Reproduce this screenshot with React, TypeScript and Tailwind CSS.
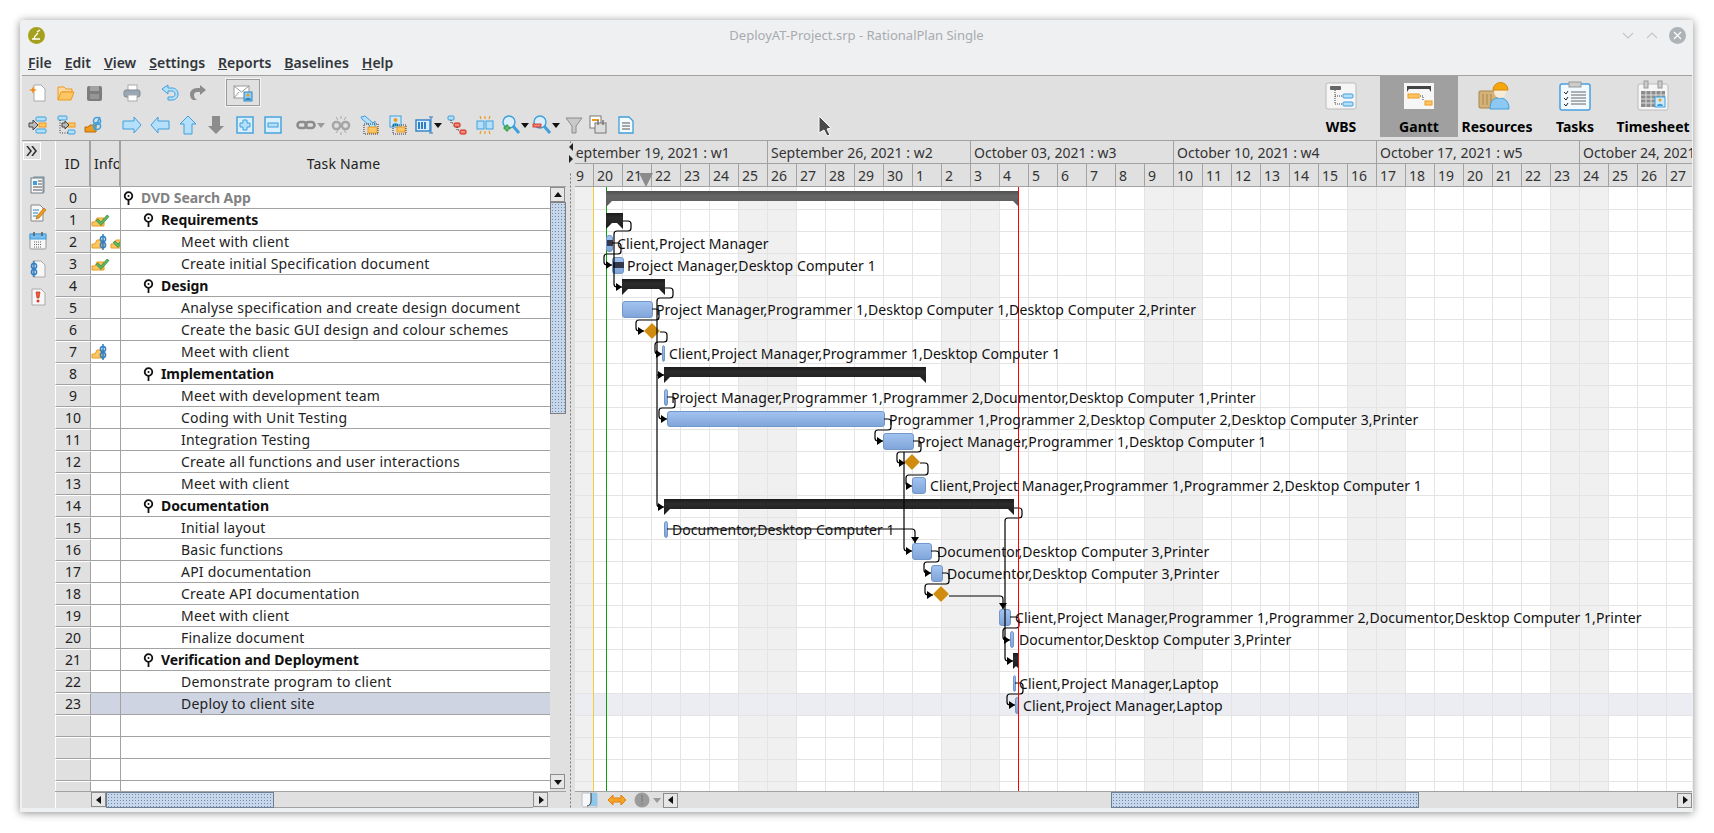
import type { ReactNode } from "react";

type Pt = [number, number];

const ic = (children: ReactNode, size = 20) => (
  <svg width={size} height={size} viewBox="0 0 20 20">
    {children}
  </svg>
);

const B = "#3f9fdc";
const BL = "#b5e0fb";
const O = "#ee9a1f";
const OL = "#fbc765";
const G = "#8c8c8c";

const Folder = ({ x = 0, y = 0 }: { x?: number; y?: number }) => (
  <g transform={`translate(${x} ${y})`}>
    <path d="M0 4h3l2-4 7 0-3 4h3v4H0z" fill={OL} stroke={O} strokeWidth="1" />
  </g>
);

const LinkBlue = ({ x = 0, y = 0 }: { x?: number; y?: number }) => (
  <g transform={`translate(${x} ${y})`} fill="none" stroke="#2f7fc4" strokeWidth="1.5">
    <path d="M3 0v16" />
    <ellipse cx="3" cy="5" rx="2.6" ry="2.6" />
    <ellipse cx="3" cy="11" rx="2.6" ry="2.6" />
  </g>
);

const icons = {
  newDoc: ic(
    <>
      <path d="M6 2h7l4 4v12H6z" fill="#fff" stroke="#aaa" />
      <path d="M5 3l1 3 3 1-3 1-1 3-1-3-3-1 3-1z" fill="#f28a12" />
    </>
  ),
  open: ic(
    <>
      <path d="M2 17V4h6l2 2h6v3H6l-4 8z" fill="#fbd9a0" stroke={O} />
      <path d="M2 17l3-8h13l-3 8z" fill={OL} stroke={O} />
    </>
  ),
  save: ic(
    <>
      <rect x="3" y="3" width="15" height="15" rx="2" fill="#7d7d7d" />
      <rect x="6" y="3" width="9" height="5" fill="#a3a3a3" />
      <rect x="6" y="11" width="9" height="5" fill="#969696" />
    </>
  ),
  print: ic(
    <>
      <rect x="6" y="2" width="9" height="6" fill="#fff" stroke="#aaa" />
      <rect x="2" y="7" width="16" height="7" rx="2" fill="#9aa7b2" stroke="#7f8a94" />
      <rect x="6" y="12" width="9" height="6" fill="#fff" stroke="#aaa" />
    </>
  ),
  undo: ic(
    <path d="M2 6l6-4v3h4c4 0 6 3 6 6s-2 6-6 6H8v-3h4c2 0 3-1 3-3s-1-3-3-3H8v3z" fill={BL} stroke={B} />
  ),
  redo: ic(<path d="M18 7l-6-5v3H9c-4 0-7 3-7 6 0 3 1 5 3 6h4c-2-1-3-3-3-5s1-3 3-3h3v3z" fill={G} />),
  mail: ic(
    <>
      <rect x="1" y="3" width="15" height="12" fill="#fff" stroke="#999" />
      <path d="M1 3l7.5 6L16 3M1 15l5-6M16 15l-5-6" fill="none" stroke="#999" />
      <rect x="11" y="9" width="8" height="9" fill="#8fcdf3" stroke="#2f86c4" />
      <circle cx="15" cy="12" r="1.6" fill="#f09a28" />
      <path d="M12 17c0-3 6-3 6 0z" fill="#2f86c4" />
    </>
  ),
  indent: ic(
    <>
      <rect x="8" y="2" width="10" height="4" rx="1" fill={BL} stroke={B} />
      <rect x="8" y="14" width="10" height="4" rx="1" fill={BL} stroke={B} />
      <rect x="11" y="8" width="7" height="4" fill={OL} stroke={O} />
      <path d="M1 8h4V5l5 5-5 5v-3H1z" fill="#bbb" stroke="#444" />
    </>
  ),
  outdent: ic(
    <>
      <rect x="2" y="1" width="9" height="4" rx="1" fill={BL} stroke={B} />
      <rect x="12" y="15" width="7" height="4" rx="1" fill={BL} stroke={B} />
      <rect x="12" y="8" width="7" height="4" fill={OL} stroke={O} />
      <path d="M4 5v13h8" fill="none" stroke="#333" strokeDasharray="1 1.5" />
      <path d="M6 8h3V6l4 4-4 4v-2H6z" fill="#bbb" stroke="#444" />
    </>
  ),
  subLink: ic(
    <>
      <path d="M1 17v-5h3l2-2h6v7z" fill={O} stroke="#b96f0c" />
      <g fill="none" stroke={B} strokeWidth="1.6">
        <circle cx="13" cy="6" r="3.5" />
        <circle cx="13" cy="11" r="3.5" />
        <path d="M16 2l-6 13" />
      </g>
    </>
  ),
  right: ic(<path d="M1 6h11V2l7 8-7 8v-4H1z" fill={BL} stroke={B} />),
  left: ic(<path d="M19 6H8V2L1 10l7 8v-4h11z" fill={BL} stroke={B} />),
  up: ic(<path d="M6 19V9H2l8-8 8 8h-4v10z" fill={BL} stroke={B} />),
  down: ic(<path d="M6 1v10H2l8 8 8-8h-4V1z" fill={G} />),
  plus: ic(
    <>
      <rect x="2" y="2" width="16" height="16" fill="#d9effd" stroke={B} strokeWidth="1.4" />
      <path d="M8 5h4v3h3v4h-3v3H8v-3H5V8h3z" fill={BL} stroke={B} />
    </>
  ),
  minus: ic(
    <>
      <rect x="2" y="2" width="16" height="16" fill="#d9effd" stroke={B} strokeWidth="1.4" />
      <rect x="5" y="8" width="10" height="4" fill={BL} stroke={B} />
    </>
  ),
  link: ic(
    <g fill="none" stroke={G} strokeWidth="2.6">
      <rect x="1.5" y="7" width="9" height="6" rx="3" />
      <rect x="9.5" y="7" width="9" height="6" rx="3" />
    </g>
  ),
  unlink: ic(
    <g fill="none" stroke="#a6a6a6">
      <rect x="2" y="7" width="7" height="7" rx="3" strokeWidth="2.4" />
      <rect x="11" y="7" width="7" height="7" rx="3" strokeWidth="2.4" />
      <path d="M10 1v3M10 17v3M5 2l2 3M15 2l-2 3M5 18l2-3M15 18l-2-3" />
    </g>
  ),
  assign: ic(
    <>
      <path d="M2 2l4-1 8 7 2-2v7H9l2-2-8-7z" fill={BL} stroke={B} />
      <rect x="9" y="12" width="9" height="6" fill={OL} stroke={O} />
      <rect x="5" y="9" width="14" height="10" fill="none" stroke="#333" strokeDasharray="1 1" />
    </>
  ),
  person: ic(
    <>
      <rect x="3" y="1" width="11" height="11" fill="#cfe9fb" stroke={B} />
      <circle cx="8.5" cy="5" r="2" fill={O} />
      <path d="M5 11c0-4 7-4 7 0z" fill={B} />
      <rect x="10" y="12" width="8" height="5" fill={OL} stroke={O} />
      <rect x="6" y="10" width="13" height="9" fill="none" stroke="#333" strokeDasharray="1 1" />
    </>
  ),
  columns: ic(
    <>
      <rect x="1" y="5" width="14" height="11" fill="#d9effd" stroke="#2f7fc4" strokeWidth="1.4" />
      <path d="M4 7v7M7 7v7M10 7v7" stroke="#2f7fc4" strokeWidth="2" />
      <path d="M16 2v16M14 2h4M14 18h4" stroke="#2f7fc4" fill="none" />
    </>
  ),
  tree: ic(
    <>
      <rect x="1" y="1" width="6" height="4" rx="1" fill={BL} stroke={B} />
      <rect x="7" y="8" width="6" height="4" rx="1" fill="#ef8a7a" stroke="#d31f10" />
      <rect x="13" y="15" width="6" height="4" rx="1" fill="#ef8a7a" stroke="#d31f10" />
      <path d="M4 5v3h3M10 12v3h3" fill="none" stroke="#333" strokeDasharray="1 1" />
    </>
  ),
  split: ic(
    <>
      <rect x="2" y="6" width="7" height="8" fill={BL} stroke={B} />
      <rect x="11" y="6" width="7" height="8" fill={BL} stroke={B} />
      <path d="M10 1v3M10 16v3M5 1l1 3M15 1l-1 3M5 19l1-3M15 19l-1-3" stroke={O} strokeWidth="1.2" />
    </>
  ),
  zoomIn: ic(
    <>
      <circle cx="8" cy="7" r="6" fill="#d9effd" stroke={B} strokeWidth="1.4" />
      <path d="M12 11l6 7" stroke={B} strokeWidth="3" />
      <path d="M3 12h2v-2h2v2h2v2H7v2H5v-2H3z" fill="#62c36b" stroke="#1c8a2e" strokeWidth=".7" />
    </>
  ),
  zoomOut: ic(
    <>
      <circle cx="8" cy="7" r="6" fill="#d9effd" stroke={B} strokeWidth="1.4" />
      <path d="M12 11l6 7" stroke={B} strokeWidth="3" />
      <rect x="1" y="9" width="8" height="3" fill="#ef8a7a" stroke="#d31f10" strokeWidth=".8" />
    </>
  ),
  funnel: ic(<path d="M2 3h16l-6 8v7H8v-7z" fill="#c9c9c9" stroke="#8c8c8c" />),
  calc: ic(
    <>
      <rect x="2" y="1" width="11" height="12" fill="#fff" stroke="#777" />
      <rect x="4" y="4" width="7" height="2" fill={O} />
      <rect x="7" y="8" width="11" height="10" fill="#ddd" stroke="#777" />
      <path d="M10 5v5M15 5v5" stroke="#777" strokeWidth="1.5" />
    </>
  ),
  doc: ic(
    <>
      <path d="M3 2h10l4 4v12H3z" fill="#f4fbff" stroke={B} strokeWidth="1.3" />
      <path d="M6 8h8M6 11h8M6 14h8" stroke="#555" />
    </>
  ),
  gnews: ic(
    <>
      <rect x="6" y="2" width="10" height="15" fill="#cfd8df" stroke="#6f8a9c" />
      <rect x="3" y="3" width="12" height="15" fill="#f7f7f7" stroke="#6f7f8a" />
      <rect x="5" y="6" width="4" height="4" fill={B} />
      <path d="M10 6h4M10 9h4M5 12h9M5 15h9" stroke="#555" />
    </>
  ),
  pencil: ic(
    <>
      <path d="M3 2h9l3 3v13H3z" fill="#f7f7f7" stroke="#888" />
      <path d="M5 7h6M5 10h5M5 13h4" stroke="#2f86c4" />
      <path d="M9 13l7-8 2 2-7 8-3 1z" fill={O} stroke="#b96f0c" strokeWidth=".7" />
    </>
  ),
  calendar: ic(
    <>
      <rect x="2" y="3" width="16" height="15" rx="1" fill="#f7f7f7" stroke="#999" />
      <rect x="2" y="3" width="16" height="5" fill="#76bdf0" stroke={B} />
      <path d="M6 1v4M14 1v4" stroke="#555" strokeWidth="1.4" />
      <path d="M6 11h8M6 13.5h8M6 16h8" stroke="#666" strokeDasharray="1 1" />
    </>
  ),
  linkDoc: ic(
    <>
      <path d="M5 2h8l4 4v12H5z" fill="#f7f7f7" stroke="#aaa" />
      <g transform="translate(3 2)">
        <LinkBlue />
      </g>
    </>
  ),
  warnDoc: ic(
    <>
      <path d="M4 2h9l4 4v12H4z" fill="#f7f7f7" stroke="#aaa" />
      <path d="M8 5h4l-1 6H9zM9 13h2v2H9z" fill="#f05a3c" stroke="#c1210e" strokeWidth=".6" />
    </>
  ),
};

const Ic = ({ icon, className = "" }: { icon: ReactNode; className?: string }) => (
  <div className={`w-[28px] h-[24px] flex items-center justify-center shrink-0 ${className}`}>{icon}</div>
);

const Drop = ({ className = "", grey }: { className?: string; grey?: boolean }) => (
  <div className={`w-[10px] flex justify-center shrink-0 ${className}`}>
    <svg width="8" height="5" viewBox="0 0 8 5">
      <path d="M0 0h8L4 5z" fill={grey ? "#999" : "#111"} />
    </svg>
  </div>
);

const TitleBar = () => (
  <div className="h-[30px] relative flex items-center justify-between pl-[8px] pr-[7px] shrink-0">
    <svg width="17" height="17" viewBox="0 0 17 17">
      <circle cx="8.5" cy="8.5" r="8.5" fill="#a6a01f" />
      <path d="M4 12h8M6 12c0-3 2-4 4-6M9 5l3-2" stroke="#fff" strokeWidth="1.3" fill="none" />
    </svg>
    <div className="absolute inset-x-0 text-center text-[13px] leading-[18px] text-[#a7abaf]">
      DeployAT-Project.srp - RationalPlan Single
    </div>
    <div className="flex items-center gap-[10px]">
      <svg width="14" height="17" viewBox="0 0 14 17">
        <path d="M2 6l5 5 5-5" fill="none" stroke="#c3c6c9" strokeWidth="1.1" />
      </svg>
      <svg width="14" height="17" viewBox="0 0 14 17">
        <path d="M2 11l5-5 5 5" fill="none" stroke="#c3c6c9" strokeWidth="1.1" />
      </svg>
      <svg width="17" height="17" viewBox="0 0 17 17">
        <circle cx="8.5" cy="8.5" r="8.5" fill="#aeb3b7" />
        <path d="M5 5l7 7M12 5l-7 7" stroke="#fff" strokeWidth="1.2" />
      </svg>
    </div>
  </div>
);

const menus = ["File", "Edit", "View", "Settings", "Reports", "Baselines", "Help"];

const MenuBar = () => (
  <div className="h-[25px] flex items-center gap-[13px] pl-[8px] pb-[1px] text-[14px] font-semibold text-[#31363b] shrink-0">
    {menus.map((m) => (
      <span key={m}>
        <span className="underline">{m[0]}</span>
        {m.slice(1)}
      </span>
    ))}
  </div>
);

const ViewIcon = ({ children }: { children: ReactNode }) => (
  <svg width="40" height="34" viewBox="0 0 40 34">
    {children}
  </svg>
);

const views: { name: string; active?: boolean; icon: ReactNode }[] = [
  {
    name: "WBS",
    icon: (
      <ViewIcon>
        <rect x="5" y="3" width="30" height="26" rx="2" fill="#f6f6f6" stroke="#bbb" />
        <rect x="9" y="6" width="11" height="4" rx="1" fill="#666" />
        <rect x="22" y="14" width="10" height="4" rx="1" fill={BL} stroke={B} />
        <rect x="22" y="22" width="10" height="4" rx="1" fill={BL} stroke={B} />
        <path d="M14 10v14h7M14 16h7" fill="none" stroke="#444" strokeDasharray="1 1" />
      </ViewIcon>
    ),
  },
  {
    name: "Gantt",
    active: true,
    icon: (
      <ViewIcon>
        <rect x="5" y="3" width="30" height="26" fill="#f6f6f6" />
        <path d="M8 6h24v6l-2-3H10l-2 3z" fill="#444" />
        <rect x="9" y="14" width="11" height="4" fill={OL} stroke={O} />
        <rect x="26" y="21" width="7" height="4" fill={OL} stroke={O} />
        <path d="M21 16h3v4" fill="none" stroke="#444" strokeDasharray="1 1" />
      </ViewIcon>
    ),
  },
  {
    name: "Resources",
    icon: (
      <ViewIcon>
        <rect x="2" y="11" width="18" height="17" rx="1" fill="#d5b27a" stroke="#a98546" />
        <path d="M6 14v11M10 14v11M14 14v11" stroke="#a98546" />
        <path d="M13 29c0-9 4-11 9-11s10 2 10 11z" fill="#8dc8f2" stroke={B} />
        <circle cx="23" cy="12" r="6" fill="#f6ebd5" />
        <path d="M16 10a7.500 7.500 0 0 1 15 0z" fill="#f5a70f" stroke="#d9860a" />
      </ViewIcon>
    ),
  },
  {
    name: "Tasks",
    icon: (
      <ViewIcon>
        <rect x="5" y="4" width="30" height="26" rx="2" fill="#f2f9ff" stroke="#4a9fe0" strokeWidth="1.5" />
        <rect x="14" y="2" width="12" height="5" fill="#ccc" stroke="#999" />
        <path d="M9 12l2 2 2-3M9 18l2 2 2-3M9 24l2 2 2-3" fill="none" stroke="#222" />
        <path d="M16 12h15M16 15h15M16 18h15M16 21h15M16 24h15" stroke="#666" />
      </ViewIcon>
    ),
  },
  {
    name: "Timesheet",
    icon: (
      <ViewIcon>
        <rect x="5" y="4" width="30" height="26" rx="2" fill="#f6f6f6" stroke="#bbb" />
        <rect x="11" y="1" width="4" height="7" fill="#ccc" stroke="#999" />
        <rect x="25" y="1" width="4" height="7" fill="#ccc" stroke="#999" />
        <rect x="8" y="11" width="24" height="16" fill="#8d8d8d" />
        <path d="M8 15h24M8 19h24M8 23h24M13 11v16M18 11v16M23 11v16M28 11v16" stroke="#ddd" />
        <rect x="22" y="17" width="10" height="10" fill="#cdeafc" stroke={B} />
        <circle cx="27" cy="20" r="1.500" fill={O} />
        <path d="M24 26c0-3 6-3 6 0z" fill={B} />
      </ViewIcon>
    ),
  },
];

const Toolbar = () => (
  <div className="h-[65px] bg-[#e0e0e0] border-t border-[#a2a2a2] flex justify-between shrink-0">
    <div className="pl-[2px] flex flex-col">
      <div className="h-[32px] flex items-center pt-[1px]">
        <Ic icon={icons.newDoc} />
        <Ic icon={icons.open} />
        <Ic icon={icons.save} />
        <Ic icon={icons.print} className="ml-[10px]" />
        <Ic icon={icons.undo} className="ml-[10px]" />
        <Ic icon={icons.redo} />
        <div className="ml-[14px] w-[34px] h-[27px] border border-[#9a9a9a] outline outline-1 outline-[#f4f4f4] flex items-center justify-center">
          {icons.mail}
        </div>
      </div>
      <div className="h-[32px] flex items-center pt-[2px]">
        <Ic icon={icons.indent} />
        <Ic icon={icons.outdent} />
        <Ic icon={icons.subLink} />
        <Ic icon={icons.right} className="ml-[10px]" />
        <Ic icon={icons.left} />
        <Ic icon={icons.up} />
        <Ic icon={icons.down} />
        <Ic icon={icons.plus} className="ml-[1px]" />
        <Ic icon={icons.minus} />
        <Ic icon={icons.link} className="ml-[5px]" />
        <Drop grey className="-ml-[4px]" />
        <Ic icon={icons.unlink} className="ml-[1px]" />
        <Ic icon={icons.assign} />
        <Ic icon={icons.person} />
        <Ic icon={icons.columns} />
        <Drop className="-ml-[6px]" />
        <Ic icon={icons.tree} />
        <Ic icon={icons.split} />
        <Ic icon={icons.zoomIn} className="-ml-[2px]" />
        <Drop className="-ml-[5px]" />
        <Ic icon={icons.zoomOut} className="-ml-[2px]" />
        <Drop className="-ml-[5px]" />
        <Ic icon={icons.funnel} className="-ml-[1px]" />
        <Ic icon={icons.calc} className="-ml-[4px]" />
        <Ic icon={icons.doc} />
      </div>
    </div>
    <div className="flex h-[61px]">
      {views.map((v) => (
        <div
          key={v.name}
          className={`w-[78px] flex flex-col items-center pt-[4px] ${v.active ? "bg-[#a0a0a0]" : ""}`}
        >
          {v.icon}
          <span className="text-[14px] font-bold leading-[20px] mt-[3px] text-black">{v.name}</span>
        </div>
      ))}
    </div>
  </div>
);

const SideStrip = () => (
  <div className="w-[33px] bg-[#e0e0e0] flex flex-col items-center shrink-0">
    <div className="w-[18px] h-[18px] mt-[1px] mr-[13px] border border-white flex items-center justify-center text-[#222]">
      <svg width="12" height="10" viewBox="0 0 12 10">
        <path d="M1 0l4 5-4 5M6 0l4 5-4 5" fill="none" stroke="#333" strokeWidth="1.6" />
      </svg>
    </div>
    <div className="mt-[15px] flex flex-col gap-[8px] mr-[1px]">
      {icons.gnews}
      {icons.pencil}
      {icons.calendar}
      {icons.linkDoc}
      {icons.warnDoc}
    </div>
  </div>
);

type Task = { id: number; name: string; level: number; info?: "check" | "link" | "both" };

const tasks: Task[] = [
  { id: 0, name: "DVD Search App", level: 0 },
  { id: 1, name: "Requirements", level: 1, info: "check" },
  { id: 2, name: "Meet with client", level: 2, info: "both" },
  { id: 3, name: "Create initial Specification document", level: 2, info: "check" },
  { id: 4, name: "Design", level: 1 },
  { id: 5, name: "Analyse specification and create design document", level: 2 },
  { id: 6, name: "Create the basic GUI design and colour schemes", level: 2 },
  { id: 7, name: "Meet with client", level: 2, info: "link" },
  { id: 8, name: "Implementation", level: 1 },
  { id: 9, name: "Meet with development team", level: 2 },
  { id: 10, name: "Coding with Unit Testing", level: 2 },
  { id: 11, name: "Integration Testing", level: 2 },
  { id: 12, name: "Create all functions and user interactions", level: 2 },
  { id: 13, name: "Meet with client", level: 2 },
  { id: 14, name: "Documentation", level: 1 },
  { id: 15, name: "Initial layout", level: 2 },
  { id: 16, name: "Basic functions", level: 2 },
  { id: 17, name: "API documentation", level: 2 },
  { id: 18, name: "Create API documentation", level: 2 },
  { id: 19, name: "Meet with client", level: 2 },
  { id: 20, name: "Finalize document", level: 2 },
  { id: 21, name: "Verification and Deployment", level: 1 },
  { id: 22, name: "Demonstrate program to client", level: 2 },
  { id: 23, name: "Deploy to client site", level: 2 },
];

const Pin = () => (
  <svg width="11" height="14" viewBox="0 0 11 14" className="shrink-0">
    <circle cx="5.5" cy="5" r="3.800" fill="#fff" stroke="#111" strokeWidth="1.8" />
    <circle cx="5.5" cy="5" r="1" fill="#111" />
    <path d="M5.5 9v5" stroke="#111" strokeWidth="1.8" />
  </svg>
);

const InfoIcons = ({ kind }: { kind: Task["info"] }) => {
  const check = (x: number) => (
    <path d={`M${x + 7} 9l3 3 6-7 2 1.500-8 9-5-5z`} fill="#5cb85c" stroke="#1c7a2c" strokeWidth=".6" />
  );
  return (
    <svg width="29" height="20" viewBox="0 0 29 20">
      <Folder x={1} y={8} />
      {kind === "check" && check(0)}
      {kind !== "check" && <LinkBlue x={9} y={2} />}
      {kind === "both" && (
        <g>
          <Folder x={20} y={8} />
          {check(17)}
        </g>
      )}
    </svg>
  );
};

const rowCount = 28;

const TablePane = () => (
  <div className="w-[511px] flex flex-col bg-[#e0e0e0] shrink-0">
    <div className="h-[46px] flex text-[14px] text-[#222] shrink-0 border-b border-[#a2a2a2] tracking-[0.2px]">
      <div className="w-[36px] border-l border-white border-r-2 border-r-[#a2a2a2] flex items-center justify-center">ID</div>
      <div className="w-[30px] border-r-2 border-r-[#a2a2a2] overflow-hidden flex items-center pl-[3px]">Info</div>
      <div className="flex-1 flex items-center justify-center">Task Name</div>
    </div>
    <div className="flex-1 flex min-h-0">
      <div className="flex-1 overflow-hidden bg-white text-[14px] leading-[20px]">
        {Array.from({ length: rowCount }, (_, i) => {
          const t = tasks[i];
          const selected = t?.id === 23;
          return (
            <div key={i} className={`h-[22px] flex ${selected ? "bg-[#ced4e2]" : ""}`}>
              <div className="w-[36px] bg-[#e0e0e0] border-l border-t border-white border-b border-b-[#a2a2a2] border-r border-r-[#a2a2a2] flex items-center justify-center text-[#222] shrink-0">
                {t?.id}
              </div>
              <div className="w-[30px] border-b border-r border-[#a2a2a2] flex items-center overflow-hidden shrink-0">
                {t?.info && <InfoIcons kind={t.info} />}
              </div>
              <div className="flex-1 border-b border-[#a2a2a2] flex items-center overflow-hidden">
                {t && t.level === 0 && (
                  <div className="flex items-center gap-[7px] pl-[2px] font-bold text-[#828282] tracking-[-0.08px]">
                    <Pin />
                    {t.name}
                  </div>
                )}
                {t && t.level === 1 && (
                  <div className="flex items-center gap-[7px] pl-[22px] font-bold text-[#111] tracking-[-0.08px]">
                    <Pin />
                    {t.name}
                  </div>
                )}
                {t && t.level === 2 && <div className="pl-[60px] text-[#222] tracking-[0.22px]">{t.name}</div>}
              </div>
            </div>
          );
        })}
      </div>
      <div className="w-[16px] flex flex-col shrink-0 pb-[2px]">
        <ScrollBtn dir="up" />
        <div className="h-[212px] border border-[#7f7f7f] bg-[#c7d7e9] bg-[radial-gradient(#6b8db5_0.7px,transparent_0.9px)] bg-[length:3px_3px]" />
        <div className="flex-1" />
        <ScrollBtn dir="down" />
      </div>
    </div>
    <div className="h-[17px] flex shrink-0 border-t border-[#a2a2a2]">
      <div className="w-[36px] border-l border-white" />
      <ScrollBtn dir="left" />
      <div className="w-[168px] border border-[#6e7f92] bg-[#c7d7e9] bg-[radial-gradient(#6b8db5_0.7px,transparent_0.9px)] bg-[length:3px_3px]" />
      <div className="w-[259px] border-b border-[#a2a2a2]" />
      <ScrollBtn dir="right" />
      <div className="flex-1" />
    </div>
  </div>
);

const ScrollBtn = ({ dir }: { dir: "up" | "down" | "left" | "right" }) => {
  const paths = {
    up: "M1 7h8L5 2z",
    down: "M1 3h8L5 8z",
    left: "M7 1v8L2 5z",
    right: "M3 1v8l5-4z",
  };
  return (
    <div className="w-[15px] h-[15px] shrink-0 bg-[#e6e6e6] border border-[#8c8c8c] flex items-center justify-center">
      <svg width="10" height="10" viewBox="0 0 10 10">
        <path d={paths[dir]} fill="#111" />
      </svg>
    </div>
  );
};

const Splitter = () => (
  <div className="w-[9px] bg-[#e0e0e0] flex flex-col items-center shrink-0 relative bg-[radial-gradient(#777_0.6px,transparent_0.8px)] bg-[length:3px_4px] bg-repeat-y bg-center">
    <svg width="7" height="30" viewBox="0 0 7 30" className="absolute top-[2px] bg-[#e0e0e0]">
      <path d="M6 0v8L2 4zM2 12v8l4-4z" fill="#222" />
    </svg>
  </div>
);

const weeks = [
  "September 19, 2021 : w1",
  "September 26, 2021 : w2",
  "October 03, 2021 : w3",
  "October 10, 2021 : w4",
  "October 17, 2021 : w5",
  "October 24, 2021 : w6",
];

const days = [
  19, 20, 21, 22, 23, 24, 25, 26, 27, 28, 29, 30, 1, 2, 3, 4, 5, 6, 7, 8, 9, 10, 11, 12, 13, 14, 15, 16, 17, 18, 19,
  20, 21, 22, 23, 24, 25, 26, 27,
];

const GanttHeader = () => (
  <div className="h-[46px] shrink-0 overflow-hidden bg-[#e0e0e0] text-[14px] text-[#333] relative">
    <div className="h-[23px] flex -ml-[10px] border-b border-[#a2a2a2]">
      {weeks.map((w) => (
        <div key={w} className="w-[203px] shrink-0 border-r border-[#a2a2a2] pl-[3px] pt-[2px] leading-[20px] whitespace-nowrap overflow-hidden">
          {w}
        </div>
      ))}
    </div>
    <div className="h-[23px] flex -ml-[10px] border-b border-[#a2a2a2]">
      {days.map((d, i) => (
        <div key={i} className="w-[29px] shrink-0 border-r border-[#a2a2a2] pl-[3px] pt-[2px] leading-[20px]">
          {d}
        </div>
      ))}
    </div>
    <svg width="14" height="14" viewBox="0 0 14 14" className="absolute left-[64px] top-[32px]">
      <path d="M0 0h14L7 14z" fill="#8b8b8b" />
    </svg>
  </div>
);

type Bar =
  | { kind: "sum"; x0: number; x1: number; y: number; fill: string }
  | { kind: "task"; x0: number; x1: number; y: number; h: number; prog?: boolean }
  | { kind: "ms"; x: number; y: number };

const bars: Bar[] = [
  { kind: "sum", x0: 606, x1: 1019, y: 190, fill: "url(#sumGrey)" },
  { kind: "sum", x0: 606, x1: 623, y: 212, fill: "url(#sumDark)" },
  { kind: "task", x0: 606, x1: 612, y: 234, h: 16, prog: true },
  { kind: "task", x0: 612, x1: 623, y: 256, h: 16, prog: true },
  { kind: "sum", x0: 622, x1: 665, y: 278, fill: "url(#sumDark)" },
  { kind: "task", x0: 622, x1: 652, y: 300, h: 16 },
  { kind: "ms", x: 652, y: 330 },
  { kind: "task", x0: 662, x1: 664, y: 344, h: 16 },
  { kind: "sum", x0: 664, x1: 926, y: 366, fill: "url(#sumDark)" },
  { kind: "task", x0: 664, x1: 667, y: 388, h: 16 },
  { kind: "task", x0: 667, x1: 884, y: 410, h: 15 },
  { kind: "task", x0: 883, x1: 913, y: 432, h: 16 },
  { kind: "ms", x: 912, y: 461 },
  { kind: "task", x0: 912, x1: 925, y: 476, h: 16 },
  { kind: "sum", x0: 664, x1: 1014, y: 498, fill: "url(#sumDark)" },
  { kind: "task", x0: 664, x1: 667, y: 520, h: 16 },
  { kind: "task", x0: 912, x1: 931, y: 542, h: 16 },
  { kind: "task", x0: 931, x1: 942, y: 564, h: 16 },
  { kind: "ms", x: 941, y: 593 },
  { kind: "task", x0: 999, x1: 1010, y: 608, h: 16 },
  { kind: "task", x0: 1010, x1: 1013, y: 630, h: 16 },
  { kind: "sum", x0: 1013, x1: 1019, y: 652, fill: "url(#sumDark)" },
  { kind: "task", x0: 1013, x1: 1015, y: 674, h: 16 },
  { kind: "task", x0: 1015, x1: 1018, y: 696, h: 16 },
];

const links: Pt[][] = [
  [[623, 220], [631, 220], [631, 230], [614, 230], [614, 286], [622, 286]],
  [[612, 242], [621, 242], [621, 253], [604, 253], [604, 264], [612, 264]],
  [[665, 287], [673, 287], [673, 297], [657, 297], [657, 506], [664, 506]],
  [[657, 374], [664, 374]],
  [[652, 308], [659, 308], [659, 319], [636, 319], [636, 330], [644, 330]],
  [[660, 331], [667, 331], [667, 341], [655, 341], [655, 353], [662, 353]],
  [[667, 396], [675, 396], [675, 407], [659, 407], [659, 418], [667, 418]],
  [[884, 418], [891, 418], [891, 429], [875, 429], [875, 440], [883, 440]],
  [[913, 440], [921, 440], [921, 451], [897, 451], [897, 462], [905, 462]],
  [[904, 451], [904, 550], [912, 550]],
  [[920, 462], [928, 462], [928, 474], [906, 474], [906, 485], [912, 485]],
  [[1014, 507], [1022, 507], [1022, 517], [1005, 517], [1005, 660], [1013, 660]],
  [[949, 595], [1003, 595], [1003, 608]],
  [[667, 528], [915, 528], [915, 542]],
  [[931, 550], [939, 550], [939, 561], [924, 561], [924, 572], [931, 572]],
  [[942, 572], [949, 572], [949, 583], [925, 583], [925, 594], [933, 594]],
  [[1010, 616], [1019, 616], [1019, 627], [1003, 627], [1003, 639], [1010, 639]],
  [[1015, 682], [1023, 682], [1023, 693], [1007, 693], [1007, 704], [1015, 704]],
];

// rounds the corners of a connector so it looks like the app's curved links
const roundPath = (pts: Pt[], r = 3) => {
  let d = `M${pts[0][0]} ${pts[0][1]}`;
  for (let i = 1; i < pts.length - 1; i++) {
    const [px, py] = pts[i - 1];
    const [x, y] = pts[i];
    const [nx, ny] = pts[i + 1];
    const a = Math.min(r, (Math.abs(x - px) + Math.abs(y - py)) / 2);
    const b = Math.min(r, (Math.abs(nx - x) + Math.abs(ny - y)) / 2);
    d += `L${x - Math.sign(x - px) * a} ${y - Math.sign(y - py) * a}`;
    d += `Q${x} ${y} ${x + Math.sign(nx - x) * b} ${y + Math.sign(ny - y) * b}`;
  }
  const last = pts[pts.length - 1];
  return `${d}L${last[0]} ${last[1]}`;
};

const arrowHead = (pts: Pt[]) => {
  const ay = pts[pts.length - 2][1];
  const [x, y] = pts[pts.length - 1];
  if (ay !== y) return `${x - 4},${y - 6} ${x + 4},${y - 6} ${x},${y}`;
  return `${x - 6},${y - 4} ${x - 6},${y + 4} ${x},${y}`;
};

const labels: { x: number; row: number; text: string }[] = [
  { x: 617, row: 2, text: "Client,Project Manager" },
  { x: 627, row: 3, text: "Project Manager,Desktop Computer 1" },
  { x: 656, row: 5, text: "Project Manager,Programmer 1,Desktop Computer 1,Desktop Computer 2,Printer" },
  { x: 669, row: 7, text: "Client,Project Manager,Programmer 1,Desktop Computer 1" },
  { x: 671, row: 9, text: "Project Manager,Programmer 1,Programmer 2,Documentor,Desktop Computer 1,Printer" },
  { x: 889, row: 10, text: "Programmer 1,Programmer 2,Desktop Computer 2,Desktop Computer 3,Printer" },
  { x: 917, row: 11, text: "Project Manager,Programmer 1,Desktop Computer 1" },
  { x: 930, row: 13, text: "Client,Project Manager,Programmer 1,Programmer 2,Desktop Computer 1" },
  { x: 672, row: 15, text: "Documentor,Desktop Computer 1" },
  { x: 937, row: 16, text: "Documentor,Desktop Computer 3,Printer" },
  { x: 947, row: 17, text: "Documentor,Desktop Computer 3,Printer" },
  { x: 1015, row: 19, text: "Client,Project Manager,Programmer 1,Programmer 2,Documentor,Desktop Computer 1,Printer" },
  { x: 1019, row: 20, text: "Documentor,Desktop Computer 3,Printer" },
  { x: 1019, row: 22, text: "Client,Project Manager,Laptop" },
  { x: 1023, row: 23, text: "Client,Project Manager,Laptop" },
];

const weekendStarts = [575, 738, 941, 1144, 1347, 1550];

const GanttChart = () => (
  <div className="flex-1 relative overflow-hidden bg-white">
    <svg className="absolute inset-0" width="1117" height="605" viewBox="575 186 1117 605">
      <defs>
        <linearGradient id="sumGrey" x1="0" x2="0" y1="0" y2="1">
          <stop offset="0" stopColor="#505050" />
          <stop offset=".3" stopColor="#666" />
          <stop offset="1" stopColor="#5a5a5a" />
        </linearGradient>
        <linearGradient id="sumDark" x1="0" x2="0" y1="0" y2="1">
          <stop offset="0" stopColor="#1b1b1b" />
          <stop offset=".3" stopColor="#2c2c2c" />
          <stop offset="1" stopColor="#1a1a1a" />
        </linearGradient>
        <linearGradient id="taskBlue" x1="0" x2="0" y1="0" y2="1">
          <stop offset="0" stopColor="#a3c4f0" />
          <stop offset="1" stopColor="#7fa4d8" />
        </linearGradient>
      </defs>
      {weekendStarts.map((x, i) => (
        <rect key={x} x={x} y="186" width={i === 0 ? 18 : 58} height="605" fill="#f0f0f0" />
      ))}
      <rect x="575" y="693" width="1117" height="22" fill="#ecedf3" />
      {days.map((_, i) => (
        <path key={i} d={`M${593.5 + 29 * i} 186V791`} stroke="#e4e4e4" />
      ))}
      {Array.from({ length: 28 }, (_, i) => (
        <path key={i} d={`M575 ${208.5 + 22 * i}H1692`} stroke="#e4e4e4" />
      ))}
      <path d="M593.5 186V791" stroke="#f4cb3a" />
      <path d="M606.5 186V791" stroke="#0b9f0b" />
      {bars.map((b, i) => {
        if (b.kind === "sum") {
          return (
            <path
              key={i}
              d={`M${b.x0} ${b.y}H${b.x1}V${b.y + 16}L${b.x1 - 6} ${b.y + 10}H${b.x0 + 6}L${b.x0} ${b.y + 16}Z`}
              fill={b.fill}
            />
          );
        }
        if (b.kind === "ms") {
          return (
            <path
              key={i}
              d={`M${b.x} ${b.y - 8}L${b.x + 8} ${b.y}L${b.x} ${b.y + 8}L${b.x - 8} ${b.y}Z`}
              fill="#d18c10"
              stroke="#e9c98c"
            />
          );
        }
        return (
          <g key={i}>
            <rect
              x={b.x0 + 0.5}
              y={b.y + 0.5}
              width={b.x1 - b.x0}
              height={b.h}
              rx="2.500"
              fill="url(#taskBlue)"
              stroke="#7297c8"
            />
            {b.prog && <rect x={b.x0 + 1} y={b.y + 5} width={b.x1 - b.x0} height="6" fill="#33394a" />}
          </g>
        );
      })}
      {links.map((pts, i) => (
        <g key={i}>
          <path d={roundPath(pts)} fill="none" stroke="#000" strokeWidth="1.2" />
          <polygon points={arrowHead(pts)} fill="#000" />
        </g>
      ))}
      <path d="M1018.5 186V791" stroke="#f00" />
    </svg>
    {labels.map((l) => (
      <span
        key={l.row}
        className="absolute whitespace-nowrap text-[14px] leading-[20px] text-[#111] tracking-[0.07px]"
        style={{ left: l.x - 575, top: 22 * l.row + 3 }}
      >
        {l.text}
      </span>
    ))}
  </div>
);

const GanttFooter = () => (
  <div className="h-[17px] flex items-center shrink-0 bg-[#e0e0e0] border-t border-[#a2a2a2]">
    <svg width="18" height="16" viewBox="0 0 18 16" className="ml-[6px]">
      <path d="M1 1h14c1 0 1 1 1 1v13H3c-1 0-2-1-2-2z" fill="#f4f8fb" stroke="#bbb" />
      <path d="M10 1v8c0 3-2 5-4 5h10V1z" fill="#8ec8ee" />
      <path d="M10 1v8c0 3-2 5-4 5" fill="none" stroke="#333" />
    </svg>
    <svg width="20" height="12" viewBox="0 0 20 12" className="ml-[8px]">
      <path d="M1 6l5-5v3h8V1l5 5-5 5V8H6v3z" fill="#f5a42a" stroke="#e07f0a" />
    </svg>
    <svg width="16" height="16" viewBox="0 0 16 16" className="ml-[7px]">
      <circle cx="8" cy="8" r="7.500" fill="#9b9b9b" />
      <path d="M7 3h2v7H7zM7 11h2v2H7z" fill="#8a8a8a" />
    </svg>
    <svg width="8" height="5" viewBox="0 0 8 5" className="ml-[3px]">
      <path d="M0 0h8L4 5z" fill="#999" />
    </svg>
    <div className="ml-[2px]">
      <ScrollBtn dir="left" />
    </div>
    <div className="w-[433px] h-full" />
    <div className="w-[308px] h-full border border-[#6e7f92] bg-[#c7d7e9] bg-[radial-gradient(#6b8db5_0.7px,transparent_0.9px)] bg-[length:3px_3px]" />
    <div className="flex-1 h-full" />
    <ScrollBtn dir="right" />
  </div>
);

export default function App() {
  return (
    <div className="w-[1714px] h-[833px] bg-white pt-[20px] pl-[20px] overflow-hidden relative font-['Noto_Sans',sans-serif]">
      <div className="w-[1673px] h-[792px] bg-[#eff0f1] flex flex-col shadow-[0_1px_8px_rgba(0,0,0,0.45)] rounded-t-[2px]">
        <TitleBar />
        <MenuBar />
        <div className="pl-[2px] pr-[1px] flex flex-col flex-1 min-h-0 pb-[4px]">
          <Toolbar />
          <div className="flex flex-1 min-h-0 border-t border-[#a2a2a2]">
            <SideStrip />
            <TablePane />
            <Splitter />
            <div className="flex-1 flex flex-col min-w-0">
              <GanttHeader />
              <GanttChart />
              <GanttFooter />
            </div>
          </div>
        </div>
      </div>
      <svg width="16" height="22" viewBox="0 0 16 22" className="absolute left-[817px] top-[115px]">
        <path d="M2 1l12 12-4 1 3 6-3 1-3-6-5 3z" fill="#4a4a4a" stroke="#fff" strokeWidth="1" />
      </svg>
    </div>
  );
}
